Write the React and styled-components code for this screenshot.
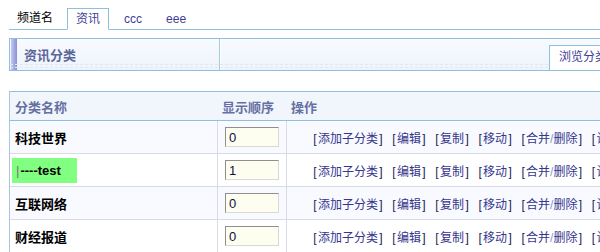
import React from 'react'
import styled, {createGlobalStyle} from 'styled-components'

const GlobalStyle = createGlobalStyle`
	html, body{
		margin: 0;
		padding: 0;
		background: #fff;
		overflow: hidden;
	}
	body{
		font-family: "Liberation Sans", "Noto Sans CJK SC", sans-serif;
		font-size: 12px;
		color: #000;
	}
`

const Page = styled.div`
	width: 760px;
	padding: 8px 9px;
`

const TabBar = styled.div`
	display: flex;
	align-items: flex-end;
	height: 21px;
	border-bottom: 1px solid #8fc0db;
`

const TabLabel = styled.div`
	padding: 0 8px;
	line-height: 21px;
	height: 21px;
	color: #000;
`

const Tab = styled.div`
	box-sizing: border-box;
	margin-left: 6px;
	padding: 0 8px;
	color: #3d3d95;
	height: ${p => p.active ? '22px' : '21px'};
	line-height: 20px;
	background: #fff;
	border: 1px solid ${p => p.active ? '#8fc0db' : 'transparent'};
	border-bottom: 1px solid ${p => p.active ? '#fff' : 'transparent'};
	margin-bottom: ${p => p.active ? '-1px' : '0'};
`

const PanelHead = styled.div`
	display: flex;
	margin-top: 8px;
	height: 31px;
	border: 1px solid #8fc0db;
	background: linear-gradient(#f8faff, #eef3fc);
	position: relative;
	&::after{
		content: '';
		position: absolute;
		left: 0;
		right: 0;
		bottom: 2px;
		height: 2px;
		border-top: 1px dashed #e1e7f3;
		border-bottom: 1px dashed #e1e7f3;
	}
`

const HeadCell = styled.div`
	display: flex;
	align-items: center;
	width: 209px;
	border-right: 1px solid #a8c8de;
	box-shadow: 1px 0 0 #fff;
`

const Accent = styled.div`
	align-self: stretch;
	width: 6px;
	margin: 0 0 0 1px;
	background: linear-gradient(to right, #c4c8ef, #8990d4);
`

const Title = styled.h3`
	margin: 0 0 0 7px;
	font-size: 13px;
	font-weight: bold;
	color: #5b6598;
`

const HeadTools = styled.div`
	flex: 1;
	display: flex;
	align-items: flex-end;
	padding-left: 329px;
	position: relative;
	z-index: 1;
`

const ViewTab = styled.div`
	box-sizing: border-box;
	height: 25px;
	padding: 0 9px;
	line-height: 23px;
	background: #fff;
	color: #3d3d95;
	border: 1px solid #8fc0db;
	border-bottom: none;
	white-space: nowrap;
`

const Table = styled.div`
	margin-top: 20px;
	border-left: 1px solid #a9c6dc;
	border-top: 1px solid #8fc0db;
`

const Row = styled.div`
	display: grid;
	grid-template-columns: 208px 69px 1fr;
	height: ${p => p.head ? '29px' : '33px'};
	box-sizing: border-box;
	background: ${p => p.head ? '#f1f6fd' : p.odd ? '#f8faff' : '#fff'};
	border-bottom: 1px solid ${p => p.head ? '#8fc0db' : '#d6dce7'};
`

const Cell = styled.div`
	display: flex;
	align-items: center;
	box-sizing: border-box;
	padding-left: ${p => p.pad}px;
	border-right: 1px solid ${p => p.divider ? '#d6dce7' : 'transparent'};
	white-space: nowrap;
	overflow: hidden;
`

const HeadText = styled.span`
	font-size: 13px;
	font-weight: bold;
	color: #6670a2;
`

const Name = styled.span`
	font-size: 13px;
	font-weight: bold;
	color: #000;
`

const Highlight = styled.span`
	display: inline-flex;
	align-items: center;
	height: 25px;
	width: 65px;
	box-sizing: border-box;
	padding-left: 4px;
	background: #80ff80;
`

const Pipe = styled.span`
	color: #777;
	font-weight: normal;
	margin-right: 1px;
`

const OrderInput = styled.input`
	box-sizing: border-box;
	width: 54px;
	height: 20px;
	padding: 0 3px;
	margin: 0;
	font-family: "Liberation Sans", sans-serif;
	font-size: 13px;
	color: #101040;
	background: #fdfdf0;
	border: 1px solid;
	border-color: #8f8f8f #d8d8d8 #d8d8d8 #8f8f8f;
	outline: none;
`

const Actions = styled.div`
	display: flex;
	gap: 7px;
	color: #35358c;
	font-size: 12px;
`

const Act = styled.span`
	cursor: pointer;
`

const Bracket = styled.span`
	display: inline-block;
	width: 6px;
	text-align: center;
	color: #222255;
`

const Slash = styled.span`
	color: #8c96d8;
`

const actions = ['添加子分类', '编辑', '复制', '移动', '合并/删除', '设置']

const categories = [
	{name: '科技世界', order: 0},
	{name: 'test', order: 1, child: true},
	{name: '互联网络', order: 0},
	{name: '财经报道', order: 0},
]

const ActionLinks = () => <Actions>
	{actions.map(a => <Act key={a}>
		<Bracket>[</Bracket>
		{a.includes('/') ? <>{a.split('/')[0]}<Slash>/</Slash>{a.split('/')[1]}</> : a}
		<Bracket>]</Bracket>
	</Act>)}
</Actions>

export default function App(){
	return <>
		<GlobalStyle />
		<Page>
			<TabBar>
				<TabLabel>频道名</TabLabel>
				<Tab active>资讯</Tab>
				<Tab>ccc</Tab>
				<Tab>eee</Tab>
			</TabBar>

			<PanelHead>
				<HeadCell>
					<Accent />
					<Title>资讯分类</Title>
				</HeadCell>
				<HeadTools>
					<ViewTab>浏览分类</ViewTab>
				</HeadTools>
			</PanelHead>

			<Table>
				<Row head>
					<Cell pad={5}><HeadText>分类名称</HeadText></Cell>
					<Cell pad={4}><HeadText>显示顺序</HeadText></Cell>
					<Cell pad={4}><HeadText>操作</HeadText></Cell>
				</Row>
				{categories.map((c, i) => <Row key={c.name} odd={i % 2 === 0}>
					<Cell pad={c.child ? 2 : 5} divider>
						{c.child
							? <Highlight><Name><Pipe>|</Pipe>----{c.name}</Name></Highlight>
							: <Name>{c.name}</Name>}
					</Cell>
					<Cell pad={7} divider>
						<OrderInput defaultValue={c.order} />
					</Cell>
					<Cell pad={25}>
						<ActionLinks />
					</Cell>
				</Row>)}
			</Table>
		</Page>
	</>
}
